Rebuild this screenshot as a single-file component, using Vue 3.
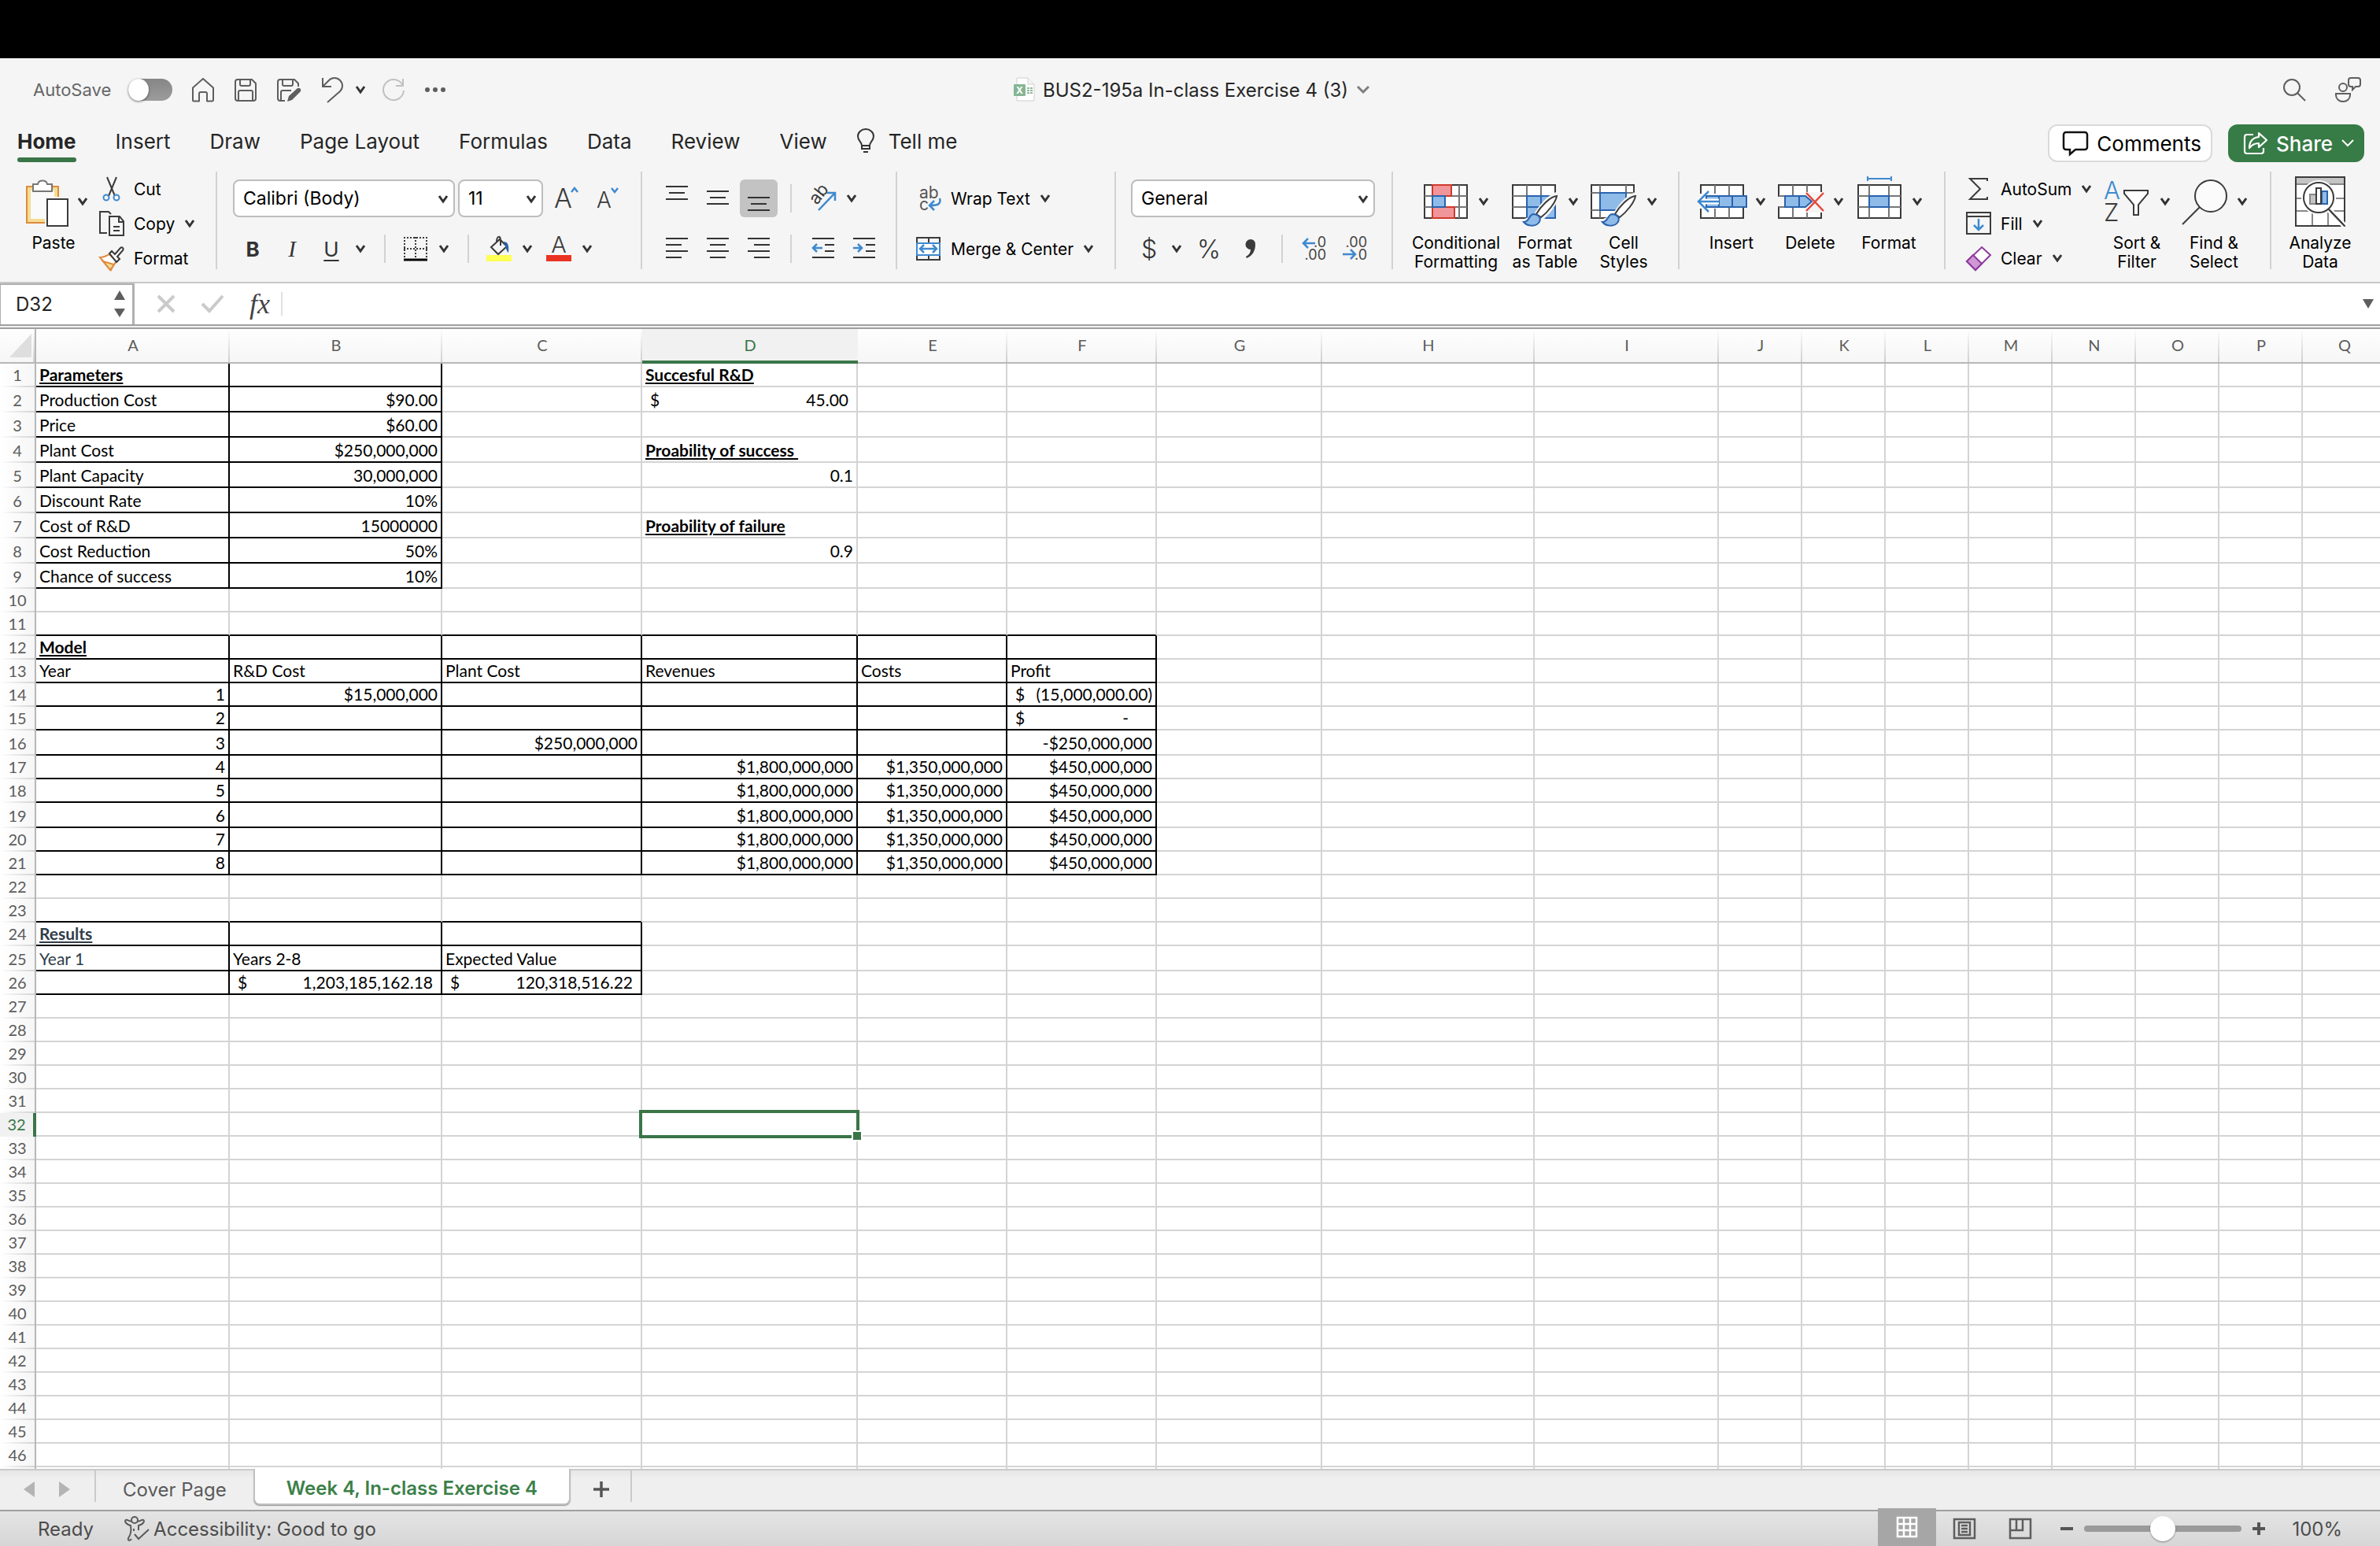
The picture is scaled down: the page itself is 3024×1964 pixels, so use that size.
<script setup>
import { ref, computed, h } from 'vue'

const autoSave = ref(false)
const fontName = ref('Calibri (Body)')
const fontSize = ref('11')
const numberFormat = ref('General')
const nameBox = ref('D32')
const formula = ref('')
const zoom = ref(100)
const menuTabs = ['Home', 'Insert', 'Draw', 'Page Layout', 'Formulas', 'Data', 'Review', 'View']
const activeTab = ref('Home')

const Chevron = () =>
  h('svg', { class: 'chevron', width: 14, height: 10, viewBox: '0 0 14 10', fill: 'none' }, [
    h('path', { d: 'M2 1l5 7 5-7', stroke: 'currentColor', 'stroke-width': 3 }),
  ])

// column widths and row heights include the 2px grid line
const columns = [
  ['A', 246], ['B', 270], ['C', 254], ['D', 274], ['E', 190], ['F', 190], ['G', 210], ['H', 270],
  ['I', 234], ['J', 106], ['K', 106], ['L', 106], ['M', 106], ['N', 106], ['O', 106], ['P', 106], ['Q', 106],
].map(([name, width]) => ({ name, width }))
const tableWidth = computed(() => columns.reduce((sum, c) => sum + c.width, 46))

const tallRows = [2, 3, 4, 5, 6, 7, 8, 9, 16, 19, 25]
const rows = Array.from({ length: 47 }, (_, i) => ({
  n: i + 1,
  height: tallRows.includes(i + 1) ? 32 : 30,
}))

const selected = { col: 'D', row: 32 }

const cells = {
  A1: { v: 'Parameters', cls: 'title' },
  A2: { v: 'Production Cost' }, B2: { v: '$90.00', cls: 'num' },
  A3: { v: 'Price' }, B3: { v: '$60.00', cls: 'num' },
  A4: { v: 'Plant Cost' }, B4: { v: '$250,000,000', cls: 'num' },
  A5: { v: 'Plant Capacity' }, B5: { v: '30,000,000', cls: 'num' },
  A6: { v: 'Discount Rate' }, B6: { v: '10%', cls: 'num' },
  A7: { v: 'Cost of R&D' }, B7: { v: '15000000', cls: 'num' },
  A8: { v: 'Cost Reduction' }, B8: { v: '50%', cls: 'num' },
  A9: { v: 'Chance of success' }, B9: { v: '10%', cls: 'num' },
  D1: { v: 'Succesful R&D', cls: 'title' },
  D2: { v: '45.00', acct: true },
  D4: { v: 'Proability of success ', cls: 'title' },
  D5: { v: '0.1', cls: 'num' },
  D7: { v: 'Proability of failure', cls: 'title' },
  D8: { v: '0.9', cls: 'num' },
  A12: { v: 'Model', cls: 'title' },
  A13: { v: 'Year' }, B13: { v: 'R&D Cost' }, C13: { v: 'Plant Cost' },
  D13: { v: 'Revenues' }, E13: { v: 'Costs' }, F13: { v: 'Profit' },
  B14: { v: '$15,000,000', cls: 'num' },
  F14: { v: '(15,000,000.00)', acct: true, cls: 'negative' },
  F15: { v: '-', acct: true, cls: 'zero' },
  C16: { v: '$250,000,000', cls: 'num' },
  F16: { v: '-$250,000,000', cls: 'num' },
  A24: { v: 'Results', cls: 'title slate' },
  A25: { v: 'Year 1', cls: 'slate' }, B25: { v: 'Years 2-8' }, C25: { v: 'Expected Value' },
  B26: { v: '1,203,185,162.18', acct: true },
  C26: { v: '120,318,516.22', acct: true },
}
for (let year = 1; year <= 8; year++) {
  cells['A' + (13 + year)] = { v: String(year), cls: 'num' }
}
for (let r = 17; r <= 21; r++) {
  cells['D' + r] = { v: '$1,800,000,000', cls: 'num' }
  cells['E' + r] = { v: '$1,350,000,000', cls: 'num' }
  cells['F' + r] = { v: '$450,000,000', cls: 'num' }
}

// bordered ranges, last column is inclusive
const ranges = [
  { last: 'B', top: 1, bottom: 9 },
  { last: 'F', top: 12, bottom: 21 },
  { last: 'C', top: 24, bottom: 26 },
]

function cellClass(col, row) {
  const inCols = ranges.filter((r) => col <= r.last)
  return [
    cells[col + row]?.cls,
    {
      'line-right': inCols.some((r) => row >= r.top && row <= r.bottom),
      'line-bottom': inCols.some((r) => row >= r.top - 1 && row <= r.bottom),
    },
  ]
}
</script>

<template>
  <div class="window">
    <div class="notch-bar"></div>

    <!-- タイトルバー -->
    <header class="title-bar">
      <div class="quick">
        <label for="autosave">AutoSave</label>
        <input id="autosave" v-model="autoSave" class="switch" type="checkbox" role="switch" />
        <button aria-label="Home">
          <svg width="30" height="32" viewBox="0 0 30 32" fill="none" stroke="#5e5e5e" stroke-width="2">
            <path d="M2 13.5L15 2l13 11.500V29a1.500 1.500 0 0 1-1.500 1.500H20V21a2 2 0 0 0-2-2h-6a2 2 0 0 0-2 2v9.500H3.500A1.500 1.500 0 0 1 2 29z" stroke-linejoin="round" />
          </svg>
        </button>
        <button aria-label="Save">
          <svg width="30" height="32" viewBox="0 0 30 32" fill="none" stroke="#5e5e5e" stroke-width="2">
            <path d="M4 3h19l5 5v19a3 3 0 0 1-3 3H5a3 3 0 0 1-3-3V6a3 3 0 0 1 3-3zM8 3v6a2 2 0 0 0 2 2h9a2 2 0 0 0 2-2V3M6 30V19a2 2 0 0 1 2-2h14a2 2 0 0 1 2 2v11" />
          </svg>
        </button>
        <button aria-label="Save as">
          <svg width="32" height="34" viewBox="0 0 32 34" fill="none" stroke="#5e5e5e" stroke-width="2">
            <path d="M11 31H5a3 3 0 0 1-3-3V7a3 3 0 0 1 3-3h18l5 5v4M8 4v6a2 2 0 0 0 2 2h9a2 2 0 0 0 2-2V4M6 31V20a2 2 0 0 1 2-2h11" />
            <path d="M14 32l2-7 11-10a3 3 0 0 1 4 4L20 30z" fill="#5e5e5e" stroke="none" />
          </svg>
        </button>
        <button class="undo" aria-label="Undo">
          <svg width="30" height="36" viewBox="0 0 30 36" fill="none" stroke="#5e5e5e" stroke-width="2">
            <path d="M3 3v11h11M3 14l8-8c4-4 10-4 14 0s4 10 0 14L9 34" />
          </svg>
          <Chevron />
        </button>
        <button class="redo" aria-label="Redo">
          <svg width="30" height="32" viewBox="0 0 30 32" fill="none" stroke="#c1c1c1" stroke-width="2">
            <path d="M27 2v9h-9M27 11A13 13 0 1 0 28 17" />
          </svg>
        </button>
        <button aria-label="More">
          <svg width="28" height="8" viewBox="0 0 28 8" fill="#5e5e5e">
            <circle cx="4" cy="4" r="3" /><circle cx="14" cy="4" r="3" /><circle cx="24" cy="4" r="3" />
          </svg>
        </button>
      </div>

      <button class="doc-title">
        <svg width="28" height="34" viewBox="0 0 28 34">
          <path d="M5 2h14l8 8v21H5z" fill="#fff" stroke="#cfcfcf" />
          <path d="M19 2v8h8" fill="#f4f4f4" stroke="#cfcfcf" />
          <path d="M18 14h3v2h-3zm4 0h3v2h-3zm-4 3h3v2h-3zm4 0h3v2h-3zm-4 3h3v2h-3zm4 0h3v2h-3z" fill="#8fb79b" />
          <rect x="1" y="10" width="15" height="15" rx="1" fill="#85b594" />
          <text x="8.500" y="22" font-size="12" font-weight="700" fill="#fff" text-anchor="middle">X</text>
        </svg>
        <span>BUS2-195a In-class Exercise 4 (3)</span>
        <svg width="18" height="10" viewBox="0 0 18 10" fill="none"><path d="M2 1l7 7 7-7" stroke="#7e7e7e" stroke-width="3" /></svg>
      </button>

      <div class="title-right">
        <button aria-label="Search">
          <svg width="30" height="30" viewBox="0 0 30 30" fill="none" stroke="#5e5e5e" stroke-width="2">
            <circle cx="12" cy="12" r="10" /><path d="M19 19l10 10" />
          </svg>
        </button>
        <button aria-label="Collaborate">
          <svg width="34" height="34" viewBox="0 0 34 34" fill="none" stroke="#5e5e5e" stroke-width="2">
            <circle cx="11" cy="14" r="5" />
            <path d="M2 22h18v2a9 8 0 0 1-18 0zM21 2h9a3 3 0 0 1 3 3v5a3 3 0 0 1-3 3h-3l-4 4v-4h-2a3 3 0 0 1-3-3V5a3 3 0 0 1 3-3z" />
          </svg>
        </button>
      </div>
    </header>

    <!-- メニュータブ -->
    <nav class="menu">
      <button
        v-for="tab in menuTabs"
        :key="tab"
        class="menu-tab"
        :class="{ active: tab === activeTab }"
        @click="activeTab = tab"
      >{{ tab }}</button>
      <button class="menu-tab tell-me">
        <svg width="22" height="32" viewBox="0 0 22 32" fill="none" stroke="#333" stroke-width="2">
          <path d="M6 22c0-5-5-6-5-12a10 9 0 0 1 20 0c0 6-5 7-5 12zM6 22v4h10v-4M8 30h6" />
        </svg>
        Tell me
      </button>
      <div class="menu-right">
        <button class="comments">
          <svg width="34" height="32" viewBox="0 0 34 32" fill="none" stroke="#111" stroke-width="2.500">
            <path d="M5 2h24a3 3 0 0 1 3 3v16a3 3 0 0 1-3 3H17l-7 6v-6H5a3 3 0 0 1-3-3V5a3 3 0 0 1 3-3z" />
          </svg>
          Comments
        </button>
        <button class="share">
          <svg width="32" height="30" viewBox="0 0 32 30" fill="none" stroke="#fff" stroke-width="2.200">
            <path d="M13 4H5a3 3 0 0 0-3 3v18a3 3 0 0 0 3 3h18a3 3 0 0 0 3-3v-4" />
            <path d="M20 2l10 9-10 9v-5c-6 0-9 2-12 6 0-8 4-13 12-14z" stroke-linejoin="round" />
          </svg>
          <span>Share</span>
          <svg width="18" height="12" viewBox="0 0 18 12" fill="none"><path d="M2 2l7 7 7-7" stroke="#fff" stroke-width="2" /></svg>
        </button>
      </div>
    </nav>

    <!-- リボン -->
    <div class="ribbon">
      <section class="group clipboard">
        <button class="big">
          <span class="big-icon">
            <svg width="64" height="64" viewBox="0 0 64 64">
              <rect x="10" y="13" width="40" height="46" fill="#f5dc94" stroke="#e08a3c" stroke-width="2" />
              <rect x="15" y="18" width="30" height="36" fill="#fafafa" />
              <path d="M18 10h6c1-6 11-6 12 0h6v9H18z" fill="#fff" stroke="#777" stroke-width="2" />
              <path d="M33 26h31v38H33z" fill="#f5f5f5" />
              <rect x="36" y="29" width="26" height="34" fill="#fff" stroke="#3b3b3b" stroke-width="2" />
            </svg>
            <Chevron />
          </span>
          <span class="big-label">Paste</span>
        </button>
        <div class="small-list">
          <button class="small">
            <svg width="32" height="32" viewBox="0 0 32 32" fill="none">
              <path d="M10 1l10 24M22 1L12 25" stroke="#3b3b3b" stroke-width="2" />
              <circle cx="9" cy="27" r="3.500" stroke="#3f89cf" stroke-width="2" /><circle cx="22" cy="27" r="3.500" stroke="#3f89cf" stroke-width="2" />
            </svg>
            Cut
          </button>
          <button class="small">
            <svg width="32" height="32" viewBox="0 0 32 32" fill="none" stroke="#3b3b3b" stroke-width="2">
              <path d="M10 28H1V1h11l3 3M13 7h13l5 6v18H13zM25 7v7h6M18 20h8M18 25h8" />
            </svg>
            Copy
            <Chevron />
          </button>
          <button class="small">
            <svg width="32" height="32" viewBox="0 0 32 32" fill="none" stroke-width="2">
              <path d="M1 15c5 0 8-2 12-4l9 9c-3 3-5 7-7 11z" fill="#fff" stroke="#e08a3c" />
              <path d="M5 20l14 4-5 7z" fill="#f5dc94" stroke="#e08a3c" />
              <path d="M13 10l3-3 4 4 7-8c2-2 5 1 3 3l-7 8 3 3-4 4z" fill="#fff" stroke="#3b3b3b" />
            </svg>
            Format
          </button>
        </div>
      </section>

      <section class="group stack font-group">
        <div class="tool-row">
          <span class="combo font-name">
            <select v-model="fontName" aria-label="Font"><option>Calibri (Body)</option></select>
            <Chevron />
          </span>
          <span class="combo font-size">
            <select v-model="fontSize" aria-label="Font size"><option>11</option></select>
            <Chevron />
          </span>
          <button class="grow-font" aria-label="Increase font size">
            <svg width="34" height="34" viewBox="0 0 34 34">
              <text x="0" y="29" font-size="34" font-weight="300" fill="#3b3b3b">A</text>
              <path d="M22 9l4-5 4 5" fill="none" stroke="#3f89cf" stroke-width="2.500" />
            </svg>
          </button>
          <button class="shrink-font" aria-label="Decrease font size">
            <svg width="34" height="34" viewBox="0 0 34 34">
              <text x="0" y="29" font-size="28" font-weight="300" fill="#3b3b3b">A</text>
              <path d="M19 4l4 5 4-5" fill="none" stroke="#3f89cf" stroke-width="2.500" />
            </svg>
          </button>
        </div>
        <div class="tool-row">
          <button class="letter bold" aria-label="Bold">B</button>
          <button class="letter italic" aria-label="Italic">I</button>
          <button class="letter underline" aria-label="Underline">U</button>
          <button class="drop" aria-label="Underline options"><Chevron /></button>
          <i class="sep"></i>
          <button aria-label="Borders">
            <svg width="32" height="32" viewBox="0 0 32 32" fill="none" stroke="#3b3b3b" stroke-width="2">
              <path d="M1 2h30M1 16h30M2 1v26M16 1v26M30 1v26" stroke-dasharray="2 2" />
              <path d="M1 30h30" stroke="#000" stroke-width="3" />
            </svg>
          </button>
          <button class="drop near" aria-label="Border options"><Chevron /></button>
          <i class="sep"></i>
          <button aria-label="Fill color">
            <svg width="32" height="34" viewBox="0 0 32 34" fill="none">
              <path d="M6 15L17 5l9 9-11 10zM13 9c0-9 5-9 5-3v7" stroke="#3b3b3b" stroke-width="2" />
              <path d="M22 8c5 0 7 4 6 14-3-2-3-8-6-14z" fill="#2a63ae" />
              <rect y="25" width="32" height="8" fill="#ffff54" />
            </svg>
          </button>
          <button class="drop near" aria-label="Fill color options"><Chevron /></button>
          <button class="font-color" aria-label="Font color">
            <svg width="32" height="34" viewBox="0 0 32 34">
              <text x="16" y="22" font-size="29" font-weight="300" fill="#3b3b3b" text-anchor="middle">A</text>
              <rect y="25" width="32" height="8" fill="#ea3323" />
            </svg>
          </button>
          <button class="drop near" aria-label="Font color options"><Chevron /></button>
        </div>
      </section>

      <section class="group stack align-group">
        <div class="tool-row">
          <button class="tool" aria-label="Top align">
            <svg width="28" height="32" viewBox="0 0 28 32" stroke="#333" stroke-width="2"><path d="M0 1h28M4 9h20M0 17h28" /></svg>
          </button>
          <button class="tool" aria-label="Middle align">
            <svg width="28" height="32" viewBox="0 0 28 32" stroke="#333" stroke-width="2"><path d="M0 7h28M4 15h20M0 23h28" /></svg>
          </button>
          <button class="tool pressed" aria-label="Bottom align" aria-pressed="true">
            <svg width="28" height="32" viewBox="0 0 28 32" stroke="#333" stroke-width="2"><path d="M0 15h28M4 23h20M0 31h28" /></svg>
          </button>
          <i class="sep"></i>
          <button class="tool" aria-label="Orientation">
            <svg width="34" height="34" viewBox="0 0 34 34">
              <text x="0" y="0" font-size="22" fill="#3b3b3b" transform="translate(9 26) rotate(-52)">ab</text>
              <path d="M11 32L32 10M22 10h10v10" fill="none" stroke="#3f89cf" stroke-width="2.500" />
            </svg>
          </button>
          <button class="drop" aria-label="Orientation options"><Chevron /></button>
        </div>
        <div class="tool-row">
          <button class="tool" aria-label="Align left">
            <svg width="28" height="28" viewBox="0 0 28 28" stroke="#333" stroke-width="2"><path d="M0 1h28M0 9h20M0 17h28M0 25h20" /></svg>
          </button>
          <button class="tool" aria-label="Center">
            <svg width="28" height="28" viewBox="0 0 28 28" stroke="#333" stroke-width="2"><path d="M0 1h28M4 9h20M0 17h28M4 25h20" /></svg>
          </button>
          <button class="tool" aria-label="Align right">
            <svg width="28" height="28" viewBox="0 0 28 28" stroke="#333" stroke-width="2"><path d="M0 1h28M8 9h20M0 17h28M8 25h20" /></svg>
          </button>
          <i class="sep"></i>
          <button class="tool" aria-label="Decrease indent">
            <svg width="28" height="28" viewBox="0 0 28 28" fill="none" stroke="#333" stroke-width="2">
              <path d="M0 1h28M16 9h12M16 17h12M0 25h28" /><path d="M13 13H2M6 8l-5 5 5 5" stroke="#3f89cf" stroke-width="2.500" />
            </svg>
          </button>
          <button class="tool" aria-label="Increase indent">
            <svg width="28" height="28" viewBox="0 0 28 28" fill="none" stroke="#333" stroke-width="2">
              <path d="M0 1h28M16 9h12M16 17h12M0 25h28" /><path d="M0 13h11M6 8l5 5-5 5" stroke="#3f89cf" stroke-width="2.500" />
            </svg>
          </button>
        </div>
      </section>

      <section class="group stack wrap-group">
        <button class="small tool-row">
          <svg width="32" height="34" viewBox="0 0 32 34">
            <text x="4" y="17" font-size="21" fill="#555">ab</text>
            <text x="4" y="32" font-size="21" fill="#555">c</text>
            <path d="M30 17c2 7-2 9-12 9M23 20l-6 6 6 6" fill="none" stroke="#3f89cf" stroke-width="2.500" />
          </svg>
          Wrap Text
          <Chevron />
        </button>
        <button class="small tool-row">
          <svg width="32" height="32" viewBox="0 0 32 32" fill="none" stroke="#3b3b3b" stroke-width="2">
            <path d="M1 2h29v28H1zM16 2v28" />
            <path d="M1 9h29v15H1z" fill="#fff" stroke="#3f89cf" />
            <path d="M6 16h20M10 11l-5 5 5 5M21 11l5 5-5 5" stroke="#3f89cf" stroke-width="2.500" />
          </svg>
          Merge &amp; Center
          <Chevron />
        </button>
      </section>

      <section class="group stack number-group">
        <div class="tool-row">
          <span class="combo number-format">
            <select v-model="numberFormat" aria-label="Number format"><option>General</option></select>
            <Chevron />
          </span>
        </div>
        <div class="tool-row">
          <button class="symbol dollar" aria-label="Accounting format">$</button>
          <button class="drop" aria-label="Currency options"><Chevron /></button>
          <button class="symbol percent" aria-label="Percent style">%</button>
          <button class="tool" aria-label="Comma style">
            <svg width="16" height="26" viewBox="0 0 16 26"><path d="M8 1a6 6 0 0 1 6 7c0 8-4 14-11 17l-1-2c4-2 6-5 6-9a6 6 0 0 1 0-13z" fill="#3b3b3b" /></svg>
          </button>
          <i class="sep"></i>
          <button aria-label="Increase decimal">
            <svg width="32" height="32" viewBox="0 0 32 32">
              <text x="31" y="14" font-size="18" fill="#444" text-anchor="end">.0</text>
              <text x="31" y="30" font-size="18" fill="#444" text-anchor="end">.00</text>
              <path d="M17 9H2M8 3L2 9l6 6" fill="none" stroke="#3f89cf" stroke-width="2.500" />
            </svg>
          </button>
          <button class="dec-decimal" aria-label="Decrease decimal">
            <svg width="32" height="32" viewBox="0 0 32 32">
              <text x="31" y="14" font-size="18" fill="#444" text-anchor="end">.00</text>
              <text x="31" y="30" font-size="18" fill="#444" text-anchor="end">.0</text>
              <path d="M0 23h16M10 17l6 6-6 6" fill="none" stroke="#3f89cf" stroke-width="2.500" />
            </svg>
          </button>
        </div>
      </section>

      <section class="group styles-group">
        <button class="big w-wide">
          <span class="big-icon">
            <svg width="60" height="64" viewBox="0 0 60 64" fill="none" stroke-width="2">
              <path d="M2 11h54v42H2z" fill="#fff" stroke="#3b3b3b" />
              <path d="M2 25h54M2 39h54M12 11v42M46 11v42" stroke="#777" />
              <path d="M12 11h24v14H12zM12 39h28v14H12z" fill="#f0959a" stroke="#d0392b" />
              <path d="M12 25h16v14H12z" fill="#8fbbe8" stroke="#2a63ae" />
              <path d="M30 26h15v12H30z" fill="#fff" />
            </svg>
            <Chevron />
          </span>
          <span class="big-label">Conditional<br />Formatting</span>
        </button>
        <button class="big w-mid">
          <span class="big-icon">
            <svg width="62" height="64" viewBox="0 0 62 64" fill="none" stroke-width="2">
              <path d="M2 11h54v42H2z" fill="#fff" stroke="#3b3b3b" />
              <path d="M2 25h54M2 39h54M20 11v42M38 11v42" stroke="#777" />
              <path d="M20 25h36v28H20zM38 25v28M20 39h36" fill="#8fbbe8" stroke="#2a63ae" />
              <path d="M57 20l4 5c-3 13-13 23-19 29l-12 10H12l2-9 14-5c7-13 17-25 29-30z" fill="#f5f5f5" />
              <path d="M32 48c5-9 17-22 26-23-1 8-12 21-20 27z" fill="#fff" stroke="#3b3b3b" />
              <path d="M16 58c8 0 6-10 13-10 7 1 10 6 6 11-4 5-14 5-19-1z" fill="#8fbbe8" stroke="#2a63ae" />
            </svg>
            <Chevron />
          </span>
          <span class="big-label">Format<br />as Table</span>
        </button>
        <button class="big w-narrow">
          <span class="big-icon">
            <svg width="62" height="64" viewBox="0 0 62 64" fill="none" stroke-width="2">
              <path d="M2 11h54v42H2z" fill="#fff" stroke="#3b3b3b" />
              <path d="M2 21h54M2 43h54M13 11v42M46 11v42" stroke="#777" />
              <path d="M13 21h33v22H13z" fill="#8fbbe8" stroke="#2a63ae" />
              <path d="M58 20v34H38l-8 10H12l2-9 14-5c7-13 18-26 30-30z" fill="#f5f5f5" />
              <path d="M32 48c5-9 17-22 26-23-1 8-12 21-20 27z" fill="#fff" stroke="#3b3b3b" />
              <path d="M16 58c8 0 6-10 13-10 7 1 10 6 6 11-4 5-14 5-19-1z" fill="#8fbbe8" stroke="#2a63ae" />
            </svg>
            <Chevron />
          </span>
          <span class="big-label">Cell<br />Styles</span>
        </button>
      </section>

      <section class="group cells-group">
        <button class="big">
          <span class="big-icon">
            <svg width="64" height="64" viewBox="0 0 64 64" fill="none" stroke-width="2">
              <path d="M5 11h54v42H5z" fill="#fff" stroke="#3b3b3b" />
              <path d="M23 11v42M41 11v42" stroke="#777" />
              <path d="M0 22h28v19H0z" fill="#f5f5f5" />
              <path d="M12 25h51v14H12zM28 25v14M45 25v14" fill="#8fbbe8" stroke="#2a63ae" />
              <path d="M28 32H2" stroke="#fff" stroke-width="7" />
              <path d="M28 32H2M15 19L2 32l13 13" stroke="#3f89cf" stroke-width="2.500" />
            </svg>
            <Chevron />
          </span>
          <span class="big-label">Insert</span>
        </button>
        <button class="big">
          <span class="big-icon">
            <svg width="62" height="64" viewBox="0 0 62 64" fill="none" stroke-width="2">
              <path d="M3 11h54v42H3z" fill="#fff" stroke="#3b3b3b" />
              <path d="M21 11v42M39 11v42M3 25h54M3 39h54" stroke="#777" />
              <path d="M2 26h9v12H2zM37 20h24v26H37z" fill="#f5f5f5" />
              <path d="M29 25h8l8 7-8 7H11V25zM29 25v14" fill="#8fbbe8" stroke="#2a63ae" />
              <path d="M38 21l22 23M60 21L38 44" stroke="#e5483c" stroke-width="2.500" />
            </svg>
            <Chevron />
          </span>
          <span class="big-label">Delete</span>
        </button>
        <button class="big">
          <span class="big-icon">
            <svg width="62" height="64" viewBox="0 0 62 64" fill="none" stroke-width="2">
              <path d="M4 11h54v42H4z" fill="#fff" stroke="#3b3b3b" />
              <path d="M4 25h54M4 39h54M18 11v42M43 11v42" stroke="#777" />
              <path d="M18 25h25v14H18z" fill="#8fbbe8" stroke="#2a63ae" />
              <path d="M16 3h30M16 0v6M46 0v6" stroke="#3f89cf" />
            </svg>
            <Chevron />
          </span>
          <span class="big-label">Format</span>
        </button>
      </section>

      <section class="group editing-group">
        <div class="small-list">
          <button class="small">
            <svg width="32" height="32" viewBox="0 0 32 32" fill="none" stroke="#3b3b3b" stroke-width="2">
              <path d="M27 6V3H5l13 13L5 29h22v-3" />
            </svg>
            AutoSum
            <Chevron />
          </button>
          <button class="small">
            <svg width="32" height="32" viewBox="0 0 32 32" fill="none" stroke="#3b3b3b" stroke-width="2">
              <path d="M1 2h30v27H1zM1 7h30" /><path d="M16 10v14M10 18l6 6 6-6" stroke="#3f89cf" stroke-width="2.500" />
            </svg>
            Fill
            <Chevron />
          </button>
          <button class="small">
            <svg width="32" height="32" viewBox="0 0 32 32" fill="none" stroke="#8e3a9d" stroke-width="2">
              <path d="M20 2l11 10-19 19L1 20z" fill="#fff" /><path d="M9 12l11 11-8 8L1 20z" fill="#cf97d6" />
            </svg>
            Clear
            <Chevron />
          </button>
        </div>
        <button class="big">
          <span class="big-icon">
            <svg width="62" height="64" viewBox="0 0 62 64" fill="none" stroke-width="2">
              <text x="1" y="29" font-size="31" fill="#3f89cf" font-weight="300">A</text>
              <text x="1" y="57" font-size="31" fill="#3b3b3b" font-weight="300">Z</text>
              <path d="M27 18h30v4L45 36v13h-6V36L27 22z" fill="#fff" stroke="#3b3b3b" />
            </svg>
            <Chevron />
          </span>
          <span class="big-label">Sort &amp;<br />Filter</span>
        </button>
        <button class="big">
          <span class="big-icon">
            <svg width="62" height="64" viewBox="0 0 62 64" fill="none" stroke="#3b3b3b" stroke-width="2">
              <circle cx="39" cy="25" r="20" fill="#fbfbfb" /><path d="M25 39L3 61" />
            </svg>
            <Chevron />
          </span>
          <span class="big-label">Find &amp;<br />Select</span>
        </button>
      </section>

      <section class="group analyze-group">
        <button class="big">
          <span class="big-icon">
            <svg width="64" height="64" viewBox="0 0 64 64" fill="none" stroke-width="2">
              <path d="M1 1h62v62H1z" fill="#fff" stroke="#3b3b3b" />
              <path d="M2 2h60v8H2z" fill="#c4c4c4" />
              <path d="M2 10h60M2 28h60M2 44h60M22 44v18M42 44v18" stroke="#888" />
              <path d="M43 42l20 21" stroke="#fff" stroke-width="7" />
              <circle cx="30" cy="27" r="22" fill="#fff" />
              <circle cx="30" cy="27" r="19" fill="#fff" stroke="#3b3b3b" />
              <path d="M43 42l20 21" stroke="#3b3b3b" stroke-width="2.500" />
              <path d="M19 23h8v12h-8z" fill="#c4c4c4" stroke="#888" />
              <path d="M34 19h7v16h-7z" fill="#8fbbe8" stroke="#2a63ae" />
              <path d="M27 15h6v20h-6z" fill="#fff" stroke="#3b3b3b" />
            </svg>
          </span>
          <span class="big-label">Analyze<br />Data</span>
        </button>
      </section>
    </div>

    <!-- 数式バー -->
    <div class="formula-bar">
      <div class="name-box">
        <input v-model="nameBox" aria-label="Name box" />
        <svg width="16" height="36" viewBox="0 0 16 36" fill="#5e5e5e"><path d="M8 1l7 12H1zM8 35l7-11H1z" /></svg>
      </div>
      <button aria-label="Cancel">
        <svg width="24" height="24" viewBox="0 0 24 24"><path d="M2 2l20 20M22 2L2 22" stroke="#cacaca" stroke-width="4" /></svg>
      </button>
      <button aria-label="Enter">
        <svg width="30" height="24" viewBox="0 0 30 24" fill="none"><path d="M2 12l9 9L28 2" stroke="#cacaca" stroke-width="4" /></svg>
      </button>
      <button class="fx" aria-label="Insert function">fx</button>
      <input v-model="formula" class="formula" aria-label="Formula" />
      <button class="expand" aria-label="Expand formula bar">
        <svg width="14" height="12" viewBox="0 0 14 12" fill="#5e5e5e"><path d="M0 0h14L7 12z" /></svg>
      </button>
    </div>
    <div class="splitter"></div>

    <!-- シート -->
    <main class="sheet">
      <table :style="{ width: tableWidth + 'px' }">
        <colgroup>
          <col class="gutter" />
          <col v-for="c in columns" :key="c.name" :style="{ width: c.width + 'px' }" />
        </colgroup>
        <thead>
          <tr>
            <th class="corner">
              <svg width="28" height="30" viewBox="0 0 28 30"><path d="M28 0v30H0z" fill="#dedede" /></svg>
            </th>
            <th v-for="c in columns" :key="c.name" class="col-head" :class="{ current: c.name === selected.col }">{{ c.name }}</th>
          </tr>
        </thead>
        <tbody>
          <tr v-for="r in rows" :key="r.n" :style="{ height: r.height + 'px' }">
            <th class="row-head" :class="{ current: r.n === selected.row }">{{ r.n }}</th>
            <td v-for="c in columns" :key="c.name" :class="cellClass(c.name, r.n)">
              <div v-if="cells[c.name + r.n]?.acct" class="acct"><span>$</span><span>{{ cells[c.name + r.n].v }}</span></div>
              <template v-else>{{ cells[c.name + r.n]?.v }}</template>
              <div v-if="c.name === selected.col && r.n === selected.row" class="selection"></div>
            </td>
          </tr>
        </tbody>
      </table>
    </main>

    <!-- シートタブ -->
    <div class="sheet-tabs">
      <div class="tab-arrows">
        <button aria-label="Previous sheet"><svg width="14" height="20" viewBox="0 0 14 20"><path d="M14 0v20L0 10z" fill="#b4b4b4" /></svg></button>
        <button aria-label="Next sheet"><svg width="14" height="20" viewBox="0 0 14 20"><path d="M0 0v20l14-10z" fill="#b4b4b4" /></svg></button>
      </div>
      <button class="sheet-tab">Cover Page</button>
      <button class="sheet-tab active">Week 4, In-class Exercise 4</button>
      <button class="add-tab" aria-label="Add sheet">
        <svg width="20" height="20" viewBox="0 0 20 20"><path d="M10 0v20M0 10h20" stroke="#555" stroke-width="3.500" /></svg>
      </button>
    </div>

    <!-- ステータスバー -->
    <footer class="status">
      <span class="ready">Ready</span>
      <button class="access">
        <svg width="34" height="34" viewBox="0 0 34 34" fill="none" stroke="#5a5a5a" stroke-width="2">
          <circle cx="14" cy="6" r="4" />
          <path d="M11 8C7 8 5 5 3 6s-1 5 6 7c1 6 0 12-3 16-1 3 2 4 4 1M17 8c4 0 6-3 8-2s1 5-6 7v6M13 20v-3M14 24l5 6L32 18" />
        </svg>
        Accessibility: Good to go
      </button>
      <div class="views">
        <button class="view active" aria-label="Normal view">
          <svg width="28" height="28" viewBox="0 0 28 28" fill="none" stroke="#fff" stroke-width="2.500"><path d="M2 2h24v24H2zM10 2v24M18 2v24M2 10h24M2 18h24" /></svg>
        </button>
        <button class="view" aria-label="Page layout view">
          <svg width="28" height="28" viewBox="0 0 28 28" fill="none" stroke="#5e5e5e" stroke-width="2.500"><path d="M1 2h26v24H1zM7 6h14v16H7zM10 10h8M10 14h8M10 18h8" /></svg>
        </button>
        <button class="view" aria-label="Page break view">
          <svg width="28" height="28" viewBox="0 0 28 28" fill="none" stroke="#5e5e5e" stroke-width="2.500"><path d="M1 2h26v24H1zM9 2v14M17 2v14H1" /></svg>
        </button>
      </div>
      <button class="zoom-step" aria-label="Zoom out" @click="zoom -= 10">
        <svg width="16" height="16" viewBox="0 0 16 16"><path d="M0 8h16" stroke="#555" stroke-width="4" /></svg>
      </button>
      <input v-model.number="zoom" class="zoom" type="range" min="0" max="200" aria-label="Zoom" />
      <button class="zoom-step" aria-label="Zoom in" @click="zoom += 10">
        <svg width="16" height="16" viewBox="0 0 16 16"><path d="M0 8h16M8 0v16" stroke="#555" stroke-width="4" /></svg>
      </button>
      <span class="zoom-value">{{ zoom }}%</span>
    </footer>
  </div>
</template>

<style>
body {
  margin: 0;
}
</style>

<style scoped>
.window {
  display: flex;
  flex-direction: column;
  height: 100vh;
  overflow: hidden;
  background: #f5f5f5;
  font-family: Inter, "Liberation Sans", sans-serif;
  color: #111;
}

button {
  display: flex;
  align-items: center;
  flex: none;
  padding: 0;
  border: none;
  background: none;
  color: inherit;
  font: inherit;
  white-space: nowrap;
}

svg {
  flex: none;
  display: block;
  overflow: visible;
}

.notch-bar {
  flex: none;
  height: 74px;
  background: #000;
}

/* title bar */
.title-bar {
  flex: none;
  display: grid;
  grid-template-columns: 1fr auto 1fr;
  align-items: center;
  height: 80px;
}

.quick {
  display: flex;
  align-items: center;
  gap: 24px;
  padding-left: 42px;
  font-size: 22px;
  color: #666;
}

.quick label {
  margin-right: -2px;
}

.switch {
  appearance: none;
  flex: none;
  width: 56px;
  height: 28px;
  margin: 0;
  border-radius: 14px;
  background: linear-gradient(#868686, #9c9c9c);
}

.switch::before {
  content: "";
  display: block;
  width: 26px;
  height: 28px;
  border-radius: 50%;
  background: #fff;
  box-shadow: 0 1px 3px #0008;
}

.undo {
  gap: 14px;
  color: #333;
}

.redo {
  margin-left: -4px;
}

.doc-title {
  gap: 10px;
  padding-left: 4px;
  font-size: 24px;
  color: #262626;
}

.title-right {
  display: flex;
  justify-content: flex-end;
  gap: 36px;
  padding-right: 24px;
}

/* menu */
.menu {
  flex: none;
  display: flex;
  gap: 50px;
  height: 64px;
  padding: 0 20px 0 22px;
  font-size: 26px;
}

.menu-tab {
  position: relative;
  height: 50px;
  color: #262626;
}

.menu-tab.active {
  font-weight: 700;
}

.menu-tab.active::after {
  content: "";
  position: absolute;
  left: 0;
  right: 0;
  bottom: -2px;
  height: 6px;
  border-radius: 3px;
  background: #3a7548;
}

.tell-me {
  gap: 18px;
  margin-left: -12px;
}

.menu-right {
  display: flex;
  gap: 20px;
  height: 48px;
  margin: 4px 0 0 auto;
}

.comments,
.share {
  box-sizing: border-box;
  height: 48px;
  border-radius: 12px;
}

.comments {
  gap: 10px;
  padding: 0 12px 0 16px;
  border: 2px solid #dadada;
  background: #fff;
  color: #000;
}

.share {
  gap: 10px;
  padding: 0 12px 0 19px;
  background: #377b46;
  color: #fff;
  font-weight: 500;
}

/* ribbon */
.ribbon {
  flex: none;
  display: flex;
  height: 140px;
  border-bottom: 2px solid #c8c8c8;
  font-size: 21px;
  color: #000;
}

.group {
  flex: none;
  box-sizing: border-box;
  display: flex;
  height: 124px;
  border-right: 2px solid #d2d2d2;
}

.chevron {
  color: #333;
}

.clipboard { width: 276px; padding-left: 20px; }
.font-group { width: 540px; padding-left: 20px; }
.align-group { width: 324px; padding-left: 20px; }
.wrap-group { width: 278px; padding-left: 24px; }
.number-group { width: 352px; padding-left: 19px; }
.styles-group { width: 364px; padding-left: 20px; }
.cells-group { width: 338px; padding-left: 16px; }
.editing-group { width: 414px; padding-left: 26px; }
.analyze-group { border: none; padding-left: 12px; }

.stack {
  flex-direction: column;
  gap: 16px;
  padding-top: 10px;
}

.tool-row {
  display: flex;
  align-items: center;
  height: 48px;
}

.big {
  flex-direction: column;
  width: 100px;
  padding-top: 6px;
}

.clipboard .big { width: 96px; margin-right: 10px; }
.w-wide { width: 120px; }
.w-mid { width: 106px; }
.w-narrow { width: 94px; }
.editing-group .big { width: 98px; }

.big-icon {
  display: flex;
  align-items: center;
  justify-content: center;
  gap: 10px;
  margin-bottom: 9px;
}

.big-label {
  line-height: 24px;
  text-align: center;
}

.small-list {
  display: flex;
  flex-direction: column;
}

.editing-group .small-list {
  width: 168px;
}

.small {
  gap: 12px;
  height: 44px;
}

.small.tool-row {
  height: 48px;
}

.combo {
  position: relative;
  display: flex;
}

.combo select {
  appearance: none;
  width: 100%;
  height: 48px;
  padding: 0 11px;
  border: 2px solid #bdbdbd;
  border-radius: 8px;
  background: #fff;
  color: #000;
  font: inherit;
  font-size: 23px;
}

.combo .chevron {
  position: absolute;
  right: 8px;
  top: 20px;
}

.font-name { width: 282px; margin-right: 4px; }
.font-size { width: 108px; }
.number-format { width: 310px; }
.grow-font { margin-left: 14px; }
.shrink-font { margin-left: 20px; }

.letter {
  justify-content: center;
  width: 50px;
  font-size: 26px;
  color: #333;
}

.bold { font-weight: 700; }
.italic { font-family: "Liberation Serif", serif; font-style: italic; font-size: 29px; }
.underline { text-decoration: underline; text-underline-offset: 4px; }

.drop {
  justify-content: center;
  width: 24px;
}

.drop.near { margin-left: 8px; }
.font-color { margin-left: 12px; }

.sep {
  width: 2px;
  height: 36px;
  margin: 0 22px 0 18px;
  background: #d2d2d2;
}

.tool {
  justify-content: center;
  width: 48px;
  height: 48px;
  border-radius: 6px;
}

.align-group .tool + .tool { margin-left: 4px; }
.align-group .sep { margin: 0 16px; }
.number-group .sep { margin: 0 24px 0 15px; }
.tool.pressed { background: #c3c3c3; }

.symbol {
  justify-content: center;
  font-size: 32px;
  font-weight: 300;
  color: #333;
}

.dollar { width: 46px; }
.percent { width: 58px; }
.dec-decimal { margin-left: 20px; }

/* formula bar */
.formula-bar {
  flex: none;
  display: flex;
  align-items: center;
  height: 52px;
  background: #fff;
}

.name-box {
  box-sizing: border-box;
  display: flex;
  align-items: center;
  width: 171px;
  height: 52px;
  margin-right: 28px;
  padding: 0 8px 2px 19px;
  border: solid #b0b0b0;
  border-width: 2px 3px 0 1px;
}

.name-box input {
  flex: 1;
  min-width: 0;
  padding: 0;
  border: none;
  font: inherit;
  font-size: 24px;
  color: #222;
}

.formula-bar > button + button {
  margin-left: 32px;
}

.fx {
  font-family: "Liberation Serif", serif;
  font-style: italic;
  font-size: 36px;
  color: #444;
}

.formula {
  flex: 1;
  height: 30px;
  margin-left: 14px;
  padding: 0 12px;
  border: none;
  border-left: 2px solid #e0e0e0;
  font: inherit;
  font-size: 23px;
}

.expand {
  margin-right: 8px;
}

.splitter {
  flex: none;
  height: 2px;
  border: solid #a0a0a0;
  border-width: 2px 0;
  background: #f0f0f0;
}

/* sheet */
.sheet {
  flex: 1;
  min-height: 0;
  overflow: hidden;
  background: #fff;
  font-family: Lato, Carlito, sans-serif;
  font-size: 21px;
  line-height: 28px;
}

table {
  table-layout: fixed;
  border-collapse: separate;
  border-spacing: 0;
}

.gutter {
  width: 46px;
}

th,
td {
  padding: 0;
  white-space: pre;
}

thead th {
  height: 42px;
  border-bottom: 2px solid #b7b7b7;
  background: linear-gradient(#0000, #d0d0d0) right / 2px 100% no-repeat, linear-gradient(#fefefe, #f6f6f6);
}

.col-head,
.row-head {
  font-size: 20px;
  font-weight: 400;
  color: #5c5c5c;
}

.col-head {
  height: 40px;
  padding-bottom: 2px;
}

.col-head.current {
  height: 40px;
  padding-bottom: 0;
  border-bottom: 4px solid #3a7548;
  background: #f1f1f1;
  color: #3a7548;
}

.corner {
  border-right: 2px solid #b7b7b7;
}

.corner svg {
  margin-left: 12px;
}

.row-head {
  padding-bottom: 2px;
  vertical-align: bottom;
  border-right: 2px solid #b7b7b7;
  background: linear-gradient(90deg, #0000, #d4d4d4) bottom / 100% 2px no-repeat, linear-gradient(90deg, #fff, #f6f6f6);
}

.row-head.current {
  border-right: 4px solid #3a7548;
  background: #f1f1f1;
  color: #3a7548;
}

td {
  position: relative;
  padding: 0 4px;
  vertical-align: bottom;
  border: solid #d4d4d4;
  border-width: 0 2px 2px 0;
  color: #000;
}

.line-right { border-right-color: #000; }
.line-bottom { border-bottom-color: #000; }

.num {
  text-align: right;
}

.title {
  font-weight: 700;
  text-decoration: underline;
  text-decoration-thickness: 2px;
  text-underline-offset: 2px;
}

.slate {
  color: #2f3d49;
}

.acct {
  display: flex;
  justify-content: space-between;
  padding: 0 6px;
}

.negative .acct { padding-right: 0; }
.zero .acct { padding-right: 30px; }

.selection {
  position: absolute;
  z-index: 1;
  inset: -4px;
  border: 4px solid #3a7548;
}

.selection::after {
  content: "";
  position: absolute;
  right: -6px;
  bottom: -6px;
  width: 10px;
  height: 10px;
  background: #3a7548;
  box-shadow: 0 0 0 2px #fff;
}

/* sheet tabs */
.sheet-tabs {
  flex: none;
  position: relative;
  display: flex;
  box-sizing: border-box;
  height: 54px;
  border-top: 2px solid #cacaca;
  border-bottom: 2px solid #9f9f9f;
  background: linear-gradient(#e6e6e6, #efefef 10px);
  font-size: 24px;
  color: #5a5a5a;
}

.tab-arrows {
  box-sizing: border-box;
  display: flex;
  gap: 31px;
  width: 122px;
  height: 48px;
  padding-left: 30px;
  background: linear-gradient(#cacaca, #cacaca) right top / 2px 40px no-repeat;
}

.sheet-tab {
  height: 48px;
  padding: 0 34px;
}

.sheet-tab.active {
  height: 46px;
  margin-top: -2px;
  padding: 4px 40px 0;
  border: 2px solid #c0c0c0;
  border-top: none;
  border-radius: 0 0 8px 8px;
  background: #fff;
  box-shadow: 0 1px 1px #999;
  color: #3b8049;
  font-weight: 600;
}

.add-tab {
  justify-content: center;
  width: 78px;
  height: 48px;
  background: linear-gradient(#cacaca, #cacaca) right top / 2px 40px no-repeat;
}

/* status bar */
.status {
  flex: none;
  display: flex;
  align-items: center;
  height: 44px;
  padding: 0 48px;
  background: linear-gradient(#e4e4e4, #d6d6d6);
  font-size: 24px;
  color: #4c4c4c;
}

.access {
  gap: 4px;
  margin-left: 38px;
}

.views {
  display: flex;
  margin-left: auto;
}

.view {
  justify-content: center;
  width: 71px;
  height: 44px;
}

.view.active {
  width: 74px;
  height: 48px;
  margin-top: -4px;
  z-index: 1;
  background: #a6a6a6;
}

.zoom-step {
  margin: 0 14px;
}

.views + .zoom-step {
  margin-left: 16px;
}

.zoom {
  appearance: none;
  width: 200px;
  height: 8px;
  margin: 0;
  border-radius: 4px;
  background: #9a9a9a;
}

.zoom::-webkit-slider-thumb {
  appearance: none;
  width: 32px;
  height: 32px;
  border-radius: 50%;
  background: #fff;
  box-shadow: 0 1px 2px #0006;
}

.zoom-value {
  margin-left: 20px;
}
</style>
